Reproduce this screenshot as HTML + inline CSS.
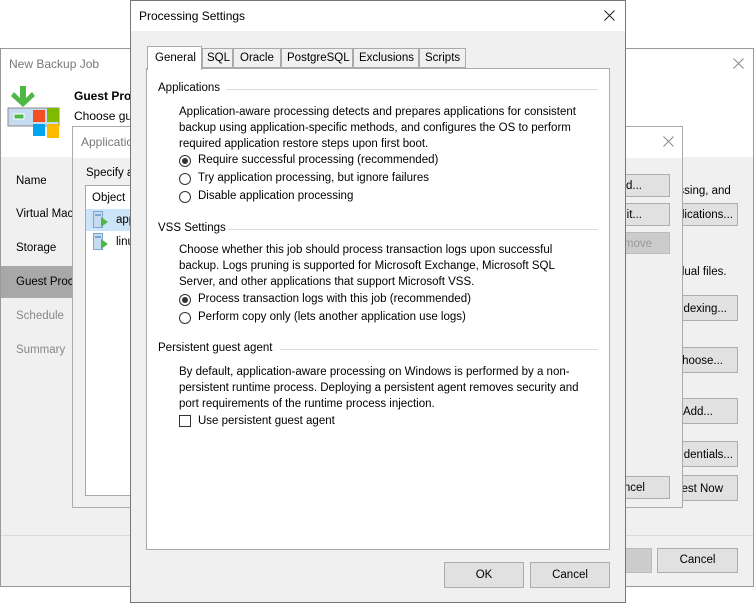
<!DOCTYPE html>
<html><head><meta charset="utf-8"><style>
*{box-sizing:border-box;margin:0;padding:0}
body{width:754px;height:603px;position:relative;background:#fff;font-family:"Liberation Sans",sans-serif;font-size:11.5px;color:#000;overflow:hidden}
.a{position:absolute;white-space:nowrap}
.btn{position:absolute;background:#e1e1e1;border:1px solid #adadad;text-align:center;line-height:23px;font-size:11.5px;overflow:hidden;white-space:nowrap}
.rad{position:absolute;width:12px;height:12px;border:1px solid #333;border-radius:50%;background:#fff}
.rad.on::after{content:"";position:absolute;left:2px;top:2px;width:6px;height:6px;border-radius:50%;background:#333}
.hl{position:absolute;height:1px;background:#dcdcdc}
</style></head><body>
<!-- back window -->
<div class="a" style="left:0;top:48px;width:754px;height:539px;border:1px solid #999;background:#f0f0f0"></div>
<div class="a" style="left:1px;top:49px;width:752px;height:108px;background:#fff"></div>
<div class="a" style="left:9px;top:57px;color:#777;font-size:12px">New Backup Job</div>
<svg class="a" style="left:733px;top:58px" width="11" height="11"><path d="M0.5 0.5L10.5 10.5M10.5 0.5L0.5 10.5" stroke="#888" stroke-width="1"/></svg>
<svg class="a" style="left:7px;top:86px" width="54" height="52">
<rect x="1" y="22" width="51" height="18" fill="#c5dcf0" stroke="#888"/>
<rect x="7" y="28" width="10" height="5" fill="#4db848" stroke="#fff"/>
<polygon points="13,0 19,0 19,12 25,6 28,10 16,21 4,10 7,6 13,12" fill="#4db848"/>
<rect x="26" y="24" width="12" height="12" fill="#f25022"/>
<rect x="40" y="22" width="12" height="14" fill="#7fba00"/>
<rect x="26" y="38" width="12" height="12" fill="#00a4ef"/>
<rect x="40" y="38" width="12" height="14" fill="#ffb900"/>
</svg>
<div class="a" style="left:74px;top:89px;font-weight:bold;font-size:12px">Guest Proc</div>
<div class="a" style="left:74px;top:109px;font-size:12px">Choose gu</div>
<div class="a" style="left:16px;top:175px">Name</div>
<div class="a" style="left:16px;top:208px">Virtual Mac</div>
<div class="a" style="left:16px;top:242px">Storage</div>
<div class="a" style="left:1px;top:266px;width:72px;height:32px;background:#a8a8a8"></div>
<div class="a" style="left:16px;top:276px">Guest Proc</div>
<div class="a" style="left:16px;top:310px;color:#888">Schedule</div>
<div class="a" style="left:16px;top:344px;color:#888">Summary</div>
<div class="a" style="left:672px;top:185px">essing, and</div>
<div class="btn" style="left:660px;top:203px;width:78px;height:23px;text-align:right;padding-right:4px">lications...</div>
<div class="a" style="left:678px;top:266px">dual files.</div>
<div class="btn" style="left:660px;top:295px;width:78px;height:26px;text-align:right;padding-right:10px;line-height:26px">dexing...</div>
<div class="btn" style="left:660px;top:347px;width:78px;height:26px;text-align:right;padding-right:14px;line-height:26px">hoose...</div>
<div class="btn" style="left:660px;top:398px;width:78px;height:26px;text-align:right;padding-right:24px;line-height:26px">Add...</div>
<div class="btn" style="left:660px;top:441px;width:78px;height:26px;text-align:right;padding-right:4px;line-height:26px">dentials...</div>
<div class="btn" style="left:660px;top:475px;width:78px;height:26px;text-align:right;padding-right:14px;line-height:26px">est Now</div>
<div class="a" style="left:1px;top:535px;width:752px;height:1px;background:#dadada"></div>
<div class="btn" style="left:600px;top:548px;width:52px;height:25px;background:#ccc;border-color:#bbb"></div>
<div class="btn" style="left:657px;top:548px;width:81px;height:25px;line-height:23px">Cancel</div>
<!-- application dialog -->
<div class="a" style="left:72px;top:126px;width:611px;height:382px;border:1px solid #aaa;background:#f0f0f0"></div>
<div class="a" style="left:73px;top:127px;width:609px;height:31px;background:#fff"></div>
<div class="a" style="left:81px;top:135px;color:#777;font-size:12px">Applicatio</div>
<svg class="a" style="left:663px;top:136px" width="11" height="11"><path d="M0.5 0.5L10.5 10.5M10.5 0.5L0.5 10.5" stroke="#888" stroke-width="1"/></svg>
<div class="a" style="left:86px;top:167px">Specify a</div>
<div class="a" style="left:85px;top:185px;width:60px;height:311px;background:#fff;border:1px solid #aaa"></div>
<div class="a" style="left:92px;top:192px">Object</div>
<div class="a" style="left:86px;top:209px;width:50px;height:22px;background:#cce4f7"></div>
<svg class="a" style="left:93px;top:211px" width="16" height="18"><rect x="0.5" y="0.5" width="9" height="16" fill="#c5dcf0" stroke="#7aa7d0"/><rect x="2" y="3" width="6" height="2" fill="#7aa7d0"/><polygon points="8,6 15,11 8,16" fill="#4db848"/></svg>
<div class="a" style="left:116px;top:214px">app</div>
<svg class="a" style="left:93px;top:233px" width="16" height="18"><rect x="0.5" y="0.5" width="9" height="16" fill="#c5dcf0" stroke="#7aa7d0"/><rect x="2" y="3" width="6" height="2" fill="#7aa7d0"/><polygon points="8,6 15,11 8,16" fill="#4db848"/></svg>
<div class="a" style="left:116px;top:236px">linu</div>
<div class="btn" style="left:600px;top:174px;width:70px;height:23px;text-align:right;padding-right:27px">dd...</div>
<div class="btn" style="left:600px;top:203px;width:70px;height:23px;text-align:right;padding-right:27px">dit...</div>
<div class="btn" style="left:600px;top:232px;width:70px;height:22px;text-align:right;padding-right:17px;background:#ccc;border-color:#bbb;color:#999">move</div>
<div class="btn" style="left:600px;top:476px;width:70px;height:23px;text-align:right;padding-right:24px">ncel</div>
<!-- processing settings -->
<div class="a" style="left:130px;top:0;width:496px;height:603px;border:1px solid #777;background:#f0f0f0"></div>
<div class="a" style="left:131px;top:1px;width:494px;height:30px;background:#fff"></div>
<div class="a" style="left:139px;top:9px;font-size:12px">Processing Settings</div>
<svg class="a" style="left:604px;top:10px" width="11" height="11"><path d="M0.5 0.5L10.5 10.5M10.5 0.5L0.5 10.5" stroke="#222" stroke-width="1"/></svg>
<div class="a" style="left:146px;top:68px;width:464px;height:482px;background:#fff;border:1px solid #aaa"></div>
<div class="a" style="left:147px;top:46px;width:55px;height:24px;background:#fff;border:1px solid #aaa;border-bottom:none;padding:5px 0 0 7px">General</div>
<div class="a" style="left:202px;top:48px;width:31px;height:20px;background:#f0f0f0;border:1px solid #aaa;padding:3px 0 0 4px">SQL</div>
<div class="a" style="left:233px;top:48px;width:48px;height:20px;background:#f0f0f0;border:1px solid #aaa;padding:3px 0 0 6px">Oracle</div>
<div class="a" style="left:281px;top:48px;width:72px;height:20px;background:#f0f0f0;border:1px solid #aaa;padding:3px 0 0 5px">PostgreSQL</div>
<div class="a" style="left:353px;top:48px;width:66px;height:20px;background:#f0f0f0;border:1px solid #aaa;padding:3px 0 0 5px">Exclusions</div>
<div class="a" style="left:419px;top:48px;width:47px;height:20px;background:#f0f0f0;border:1px solid #aaa;padding:3px 0 0 5px">Scripts</div>

<div class="a" style="left:158px;top:82px">Applications</div><div class="hl" style="left:226px;top:89px;width:372px"></div>
<div class="a" style="left:179px;top:104px;line-height:16px">Application-aware processing detects and prepares applications for consistent<br>backup using application-specific methods, and configures the OS to perform<br>required application restore steps upon first boot.</div>
<div class="rad on" style="left:179px;top:155px"></div><div class="a" style="left:198px;top:154px">Require successful processing (recommended)</div>
<div class="rad" style="left:179px;top:173px"></div><div class="a" style="left:198px;top:172px">Try application processing, but ignore failures</div>
<div class="rad" style="left:179px;top:191px"></div><div class="a" style="left:198px;top:190px">Disable application processing</div>

<div class="a" style="left:158px;top:222px">VSS Settings</div><div class="hl" style="left:228px;top:229px;width:370px"></div>
<div class="a" style="left:179px;top:242px;line-height:16px">Choose whether this job should process transaction logs upon successful<br>backup. Logs pruning is supported for Microsoft Exchange, Microsoft SQL<br>Server, and other applications that support Microsoft VSS.</div>
<div class="rad on" style="left:179px;top:294px"></div><div class="a" style="left:198px;top:293px">Process transaction logs with this job (recommended)</div>
<div class="rad" style="left:179px;top:312px"></div><div class="a" style="left:198px;top:311px">Perform copy only (lets another application use logs)</div>

<div class="a" style="left:158px;top:342px">Persistent guest agent</div><div class="hl" style="left:280px;top:349px;width:318px"></div>
<div class="a" style="left:179px;top:364px;line-height:16px">By default, application-aware processing on Windows is performed by a non-<br>persistent runtime process. Deploying a persistent agent removes security and<br>port requirements of the runtime process injection.</div>
<div class="a" style="left:179px;top:415px;width:12px;height:12px;border:1px solid #333;background:#fff"></div><div class="a" style="left:198px;top:415px">Use persistent guest agent</div>

<div class="btn" style="left:444px;top:562px;width:80px;height:26px;line-height:24px">OK</div>
<div class="btn" style="left:530px;top:562px;width:80px;height:26px;line-height:24px">Cancel</div>
</body></html>
